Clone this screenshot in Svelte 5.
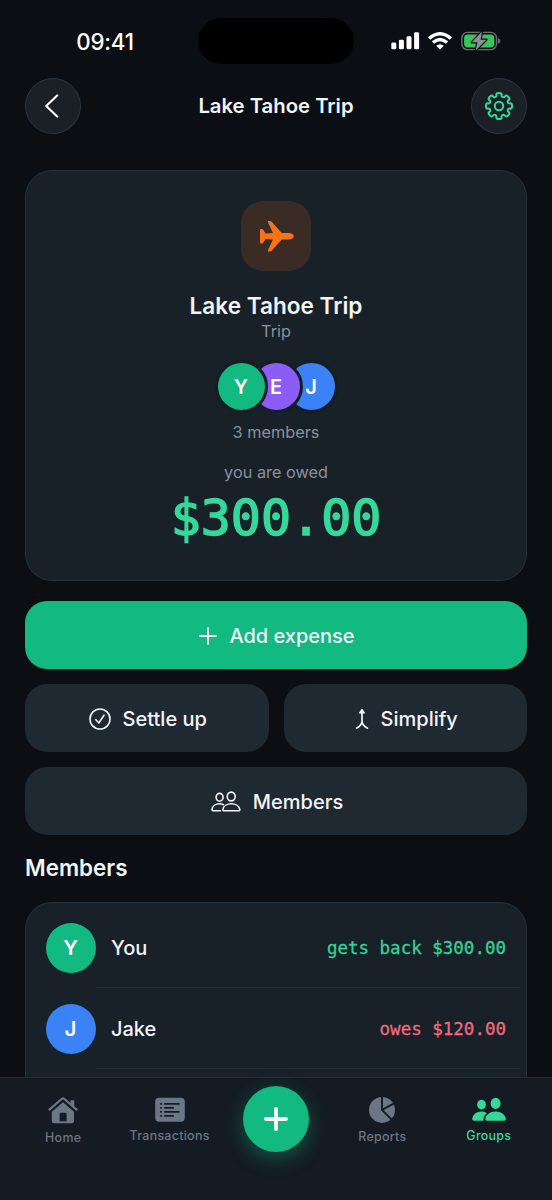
<script lang="ts">
  type Member = { name: string; color: string; label?: string; tone?: string };

  const group = {
    name: 'Lake Tahoe Trip',
    type: 'Trip',
    balance: '$300.00'
  };

  const avatars: Member[] = [
    { name: 'You', color: '#12b981' },
    { name: 'Emma', color: '#8b5cf6' },
    { name: 'Jake', color: '#3b82f6' }
  ];

  const rows: Member[] = [
    { name: 'You', color: '#12b981', label: 'gets back $300.00', tone: 'positive' },
    { name: 'Jake', color: '#3b82f6', label: 'owes $120.00', tone: 'negative' }
  ];

  // Eight-tooth gear outline, smoothed through the midpoints
  function gearPath(c: number, outer: number, inner: number) {
    const pts: number[][] = [];
    for (let i = 0; i < 8; i++) {
      for (const [r, d] of [[inner, -13], [outer, -13], [outer, 13], [inner, 13]]) {
        const a = ((i * 45 + d - 90) * Math.PI) / 180;
        pts.push([c + r * Math.cos(a), c + r * Math.sin(a)]);
      }
    }
    const mid = (p: number[], q: number[]) => `${((p[0] + q[0]) / 2).toFixed(2)} ${((p[1] + q[1]) / 2).toFixed(2)}`;
    let d = `M${mid(pts[pts.length - 1], pts[0])}`;
    pts.forEach((p, i) => {
      d += `Q${p[0].toFixed(2)} ${p[1].toFixed(2)} ${mid(p, pts[(i + 1) % pts.length])}`;
    });
    return d + 'Z';
  }
</script>

<div class="screen">
  <div class="status">
    <span class="time">09:41</span>
    <span class="island"></span>
    <div class="signals">
      <svg width="29" height="18" viewBox="0 0 29 18" fill="#fff">
        <rect x="0.3" y="10.5" width="5" height="6.8" rx="1.4" />
        <rect x="7.9" y="7.7" width="5" height="9.6" rx="1.4" />
        <rect x="15.5" y="4.2" width="5" height="13.1" rx="1.4" />
        <rect x="23.1" y="0.2" width="5" height="17.1" rx="1.4" />
      </svg>
      <svg width="24" height="18" viewBox="0 0 24 18" fill="none" stroke="#fff" stroke-width="3.3">
        <path d="M1.1 6.4Q12-3 22.9 6.4" />
        <path d="M4.9 10.6Q12 4.5 19.1 10.6" />
        <path d="M12 17.4L8.2 13.7Q12 10.7 15.8 13.7Z" fill="#fff" stroke="none" />
      </svg>
      <svg class="battery" width="40" height="20" viewBox="0 0 40 20">
        <rect x="0.9" y="1.4" width="34.6" height="17.2" rx="5.6" fill="none" stroke="#6c6e72" stroke-width="1.4" />
        <path d="M37 7.2Q39.4 8 39.4 10T37 12.8Z" fill="#6c6e72" />
        <rect x="3.1" y="3.6" width="30.2" height="12.8" rx="3.6" fill="#34c759" />
        <path d="M21 0.6L10.8 11.3H16.4L14.7 19.4L25.4 8.7H19.6Z" fill="#8d8e91" stroke="#0b0f14" stroke-width="2.4" stroke-linejoin="round" paint-order="stroke" />
      </svg>
    </div>
  </div>

  <header>
    <button class="round back" aria-label="Back">
      <svg width="16" height="24" viewBox="0 0 16 24" fill="none" stroke="#fff" stroke-width="2.1" stroke-linecap="round" stroke-linejoin="round">
        <path d="M13.2 1.4L2.2 12L13.2 22.6" />
      </svg>
    </button>
    <h1>{group.name}</h1>
    <button class="round" aria-label="Settings">
      <svg width="30" height="30" viewBox="0 0 30 30" fill="none" stroke="#34d99a" stroke-width="2">
        <path d={gearPath(15, 13.4, 9.7)} />
        <circle cx="15" cy="15" r="4.2" />
      </svg>
    </button>
  </header>

  <main>
    <section class="card summary">
      <div class="badge">
        <svg width="36" height="32" viewBox="0 0 36 32" fill="#f97316">
          <path d="M2 9.8Q2 9 2.7 9H4Q4.6 9 5 9.5L7.6 13.5L15 13L9.8 2Q9.4 1 10.5 1H12.2Q13 1 13.6 1.7L23.8 13H31Q35.7 13.5 35.7 16.2T31 19.4H23.8L13.6 30.7Q13 31.4 12.2 31.4H10.5Q9.4 31.4 9.8 30.4L15 19.4L7.6 18.9L5 22.9Q4.6 23.6 4 23.6H2.7Q2 23.6 2 22.6Z" />
        </svg>
      </div>
      <h2>{group.name}</h2>
      <p class="type">{group.type}</p>
      <div class="stack">
        {#each avatars as m, i}
          <span class="avatar small" style="background: {m.color}; z-index: {3 - i}">{m.name[0]}</span>
        {/each}
      </div>
      <p class="count">{avatars.length} members</p>
      <p class="owed">you are owed</p>
      <div class="amount">{group.balance}</div>
    </section>

    <div class="actions">
      <button class="btn primary">
        <svg width="18" height="18" viewBox="0 0 18 18" stroke="currentColor" stroke-width="1.8" stroke-linecap="round">
          <path d="M9 1V17M1 9H17" />
        </svg>
        Add expense
      </button>
      <button class="btn">
        <svg width="22" height="22" viewBox="0 0 22 22" fill="none" stroke="currentColor" stroke-width="1.6" stroke-linecap="round" stroke-linejoin="round">
          <circle cx="11" cy="11" r="10" />
          <path d="M6.9 11.7L9.8 15L15 7.2" />
        </svg>
        Settle up
      </button>
      <button class="btn">
        <svg width="14" height="22" viewBox="0 0 14 22" fill="none" stroke="currentColor" stroke-width="1.7" stroke-linecap="round" stroke-linejoin="round">
          <path d="M7 4V14.6M1.5 20.2Q6.4 17.4 7 13.8Q7.6 17.4 12.5 20.2" />
          <path d="M7 1.4L9.5 5H4.5Z" fill="currentColor" stroke-width="1.2" />
        </svg>
        Simplify
      </button>
      <button class="btn wide">
        <svg width="30" height="22" viewBox="0 0 30 22" fill="none" stroke="currentColor" stroke-width="1.6" stroke-linecap="round" stroke-linejoin="round">
          <ellipse cx="8.6" cy="6.3" rx="3.5" ry="3.9" />
          <ellipse cx="20.2" cy="5.5" rx="4" ry="4.4" />
          <path d="M9.6 19.8H2.4Q1 19.8 1 18.4C1.4 15 4.8 12.8 8.6 12.8Q10.8 12.8 12.4 13.7" />
          <path d="M13.2 19.8Q11.8 19.8 11.9 18.5C12.4 15 16 12.8 20.3 12.8S28.2 15 28.8 18.5Q28.9 19.8 27.4 19.8Z" />
        </svg>
        Members
      </button>
    </div>

    <h3>Members</h3>
    <section class="card list">
      {#each rows as m}
        <div class="row">
          <span class="avatar" style="background: {m.color}">{m.name[0]}</span>
          <span class="name">{m.name}</span>
          <span class="balance {m.tone}">{m.label}</span>
        </div>
      {/each}
    </section>
  </main>

  <nav>
    <div class="tab">
      <svg width="32" height="28" viewBox="0 0 32 28" fill="currentColor">
        <path d="M2.4 13.6L14.6 3Q16 1.9 17.4 3L29.6 13.6" fill="none" stroke="currentColor" stroke-width="2.2" stroke-linecap="round" stroke-linejoin="round" />
        <path d="M23.8 4.6H27V10.2L23.8 7.4Z" stroke="currentColor" stroke-width="0.6" stroke-linejoin="round" />
        <path fill-rule="evenodd" d="M16 6.3L27 15.8V24.8Q27 27.3 24.5 27.3H7.3Q4.8 27.3 4.8 24.8V15.8ZM12.6 17.8V25.3H19.6V17.8Q19.6 16.8 18.6 16.8H13.6Q12.6 16.8 12.6 17.8Z" />
      </svg>
      <span>Home</span>
    </div>
    <div class="tab">
      <svg width="30" height="26" viewBox="0 0 30 26">
        <rect x="0.2" y="1.8" width="29.6" height="24" rx="4" fill="currentColor" />
        <g stroke="#141b22" stroke-width="1.7" stroke-linecap="round">
          <path d="M9.8 7.9H24M9.8 11.8H18.2M9.8 15.8H24M9.8 19.8H18.2" />
          <path d="M5.7 7.9h.6M5.7 11.8h.6M5.7 15.8h.6M5.7 19.8h.6" />
        </g>
      </svg>
      <span>Transactions</span>
    </div>
    <div class="tab">
      <button class="fab" aria-label="Add">
        <svg width="26" height="26" viewBox="0 0 26 26" stroke="#fff" stroke-width="3.8" stroke-linecap="round">
          <path d="M13 3V23M3 13H23" />
        </svg>
      </button>
    </div>
    <div class="tab">
      <svg width="28" height="27" viewBox="0 0 28 27">
        <circle cx="14" cy="13.9" r="13" fill="currentColor" />
        <path d="M14 0V13.9L23.4 23.3M14 13.9L27 6.8" fill="none" stroke="#141b22" stroke-width="1.9" />
      </svg>
      <span>Reports</span>
    </div>
    <div class="tab active">
      <svg width="34" height="26" viewBox="0 0 34 26" fill="currentColor">
        <ellipse cx="9.5" cy="8.6" rx="4.4" ry="4.9" />
        <ellipse cx="23.6" cy="7.4" rx="5" ry="5.6" />
        <path d="M2 24.7Q0.2 24.7 0.2 23.1C0.7 18.6 4.4 15.6 9.5 15.6Q12.6 15.6 14.8 16.9Q11.4 19.8 11.3 23.4Q11.3 24.2 11.6 24.7Z" />
        <path d="M15 24.7Q13 24.7 13.2 22.9C13.8 18.6 17.8 15.4 23.6 15.4S33.3 18.6 33.9 22.9Q34 24.7 32.2 24.7Z" />
      </svg>
      <span>Groups</span>
    </div>
  </nav>
</div>

<style>
  :global(body) {
    margin: 0;
    background: #0b0f14;
  }

  .screen {
    width: 552px;
    height: 1200px;
    display: flex;
    flex-direction: column;
    overflow: hidden;
    background: #0b0f14;
    color: #f1f4f8;
    font-family: Inter, sans-serif;
    -webkit-font-smoothing: antialiased;
  }

  h1, h2, h3, p {
    margin: 0;
  }

  button {
    border: 0;
    padding: 0;
    font-family: inherit;
    color: inherit;
  }

  svg {
    display: block;
    flex: none;
  }

  .status {
    display: grid;
    grid-template-columns: 198px 156px 198px;
    align-items: center;
    height: 46px;
    padding-top: 18px;
  }

  .time {
    justify-self: center;
    padding-left: 12px;
    font-size: 22.3px;
    font-weight: 550;
    letter-spacing: -0.2px;
    color: #fff;
  }

  .island {
    height: 46px;
    border-radius: 23px;
    background: #000;
  }

  .signals {
    display: flex;
    align-items: center;
    gap: 8px;
    padding-left: 37px;
  }

  .battery {
    margin-left: 1px;
  }

  header {
    display: flex;
    align-items: center;
    justify-content: space-between;
    height: 56px;
    padding: 14px 25px 36px;
  }

  h1 {
    padding-bottom: 1px;
    font-size: 20.3px;
    font-weight: 600;
  }

  .round {
    display: flex;
    align-items: center;
    justify-content: center;
    width: 56px;
    height: 56px;
    box-sizing: border-box;
    border: 1px solid #2b3642;
    border-radius: 50%;
    background: #1b1f26;
  }

  .back {
    padding-right: 3px;
  }

  main {
    flex: 1;
    min-height: 0;
    overflow: hidden;
    padding: 0 25px;
  }

  .card {
    border: 1px solid #28323c;
    border-radius: 27px;
    background: #182028;
  }

  .summary {
    display: flex;
    flex-direction: column;
    align-items: center;
    height: 379px;
    padding-top: 30px;
  }

  .badge {
    display: flex;
    align-items: center;
    justify-content: center;
    width: 70px;
    height: 70px;
    border-radius: 22px;
    background: #3a2b25;
  }

  h2 {
    margin-top: 21px;
    font-size: 22.6px;
    font-weight: 600;
    line-height: 28px;
  }

  .type, .count, .owed {
    font-size: 16.3px;
    line-height: 22px;
    color: #89929d;
  }

  .stack {
    display: flex;
    margin-top: 21px;
  }

  .avatar {
    display: flex;
    align-items: center;
    justify-content: center;
    width: 50px;
    height: 50px;
    border-radius: 50%;
    font-size: 20.5px;
    font-weight: 600;
    color: #fff;
  }

  .avatar.small {
    position: relative;
    width: 47px;
    height: 47px;
    font-size: 20px;
    box-shadow: 0 0 0 3px #161d25;
  }

  .avatar.small + .avatar.small {
    margin-left: -12px;
  }

  .count {
    margin-top: 11px;
  }

  .owed {
    margin-top: 18px;
  }

  .amount {
    margin-top: 5px;
    font-family: 'DejaVu Sans Mono', monospace;
    font-size: 50px;
    line-height: 60px;
    color: #34d99a;
    -webkit-text-stroke: 1.5px #34d99a;
  }

  .actions {
    display: grid;
    grid-template-columns: 1fr 1fr;
    gap: 15px;
    margin-top: 20px;
  }

  .btn {
    display: flex;
    align-items: center;
    justify-content: center;
    gap: 12px;
    height: 68px;
    padding: 1px 0 0 2px;
    box-sizing: border-box;
    border-radius: 22px;
    background: #1f2932;
    font-size: 20px;
    font-weight: 500;
  }

  .primary, .wide {
    grid-column: 1 / -1;
  }

  .primary {
    background: #12b981;
  }

  h3 {
    margin-top: 18px;
    font-size: 22.4px;
    font-weight: 600;
    line-height: 30px;
  }

  .list {
    height: 300px;
    margin-top: 19px;
    padding: 4px 0 0 19.5px;
  }

  .row {
    display: flex;
    align-items: center;
    height: 81px;
    padding-right: 20px;
    position: relative;
  }

  .row::after {
    content: '';
    position: absolute;
    left: 50px;
    right: 5px;
    bottom: 0;
    height: 1px;
    background: #222b35;
  }

  .name {
    flex: 1;
    margin-left: 15.5px;
    font-size: 20px;
    font-weight: 500;
  }

  .balance {
    font-family: 'DejaVu Sans Mono', monospace;
    font-size: 17.5px;
    -webkit-text-stroke: 0.3px currentColor;
  }

  .positive {
    color: #34d399;
  }

  .negative {
    color: #f2697d;
  }

  nav {
    display: grid;
    grid-template-columns: repeat(5, 1fr);
    height: 122px;
    padding: 0 10px;
    border-top: 1px solid #232d36;
    background: #141b22;
  }

  .tab {
    display: flex;
    flex-direction: column;
    align-items: center;
    padding-top: 18px;
    color: #6b7785;
    font-size: 12.4px;
    font-weight: 500;
    letter-spacing: 0.3px;
    line-height: 16px;
  }

  .tab span {
    margin-top: 6px;
  }

  .tab.active {
    color: #34d99a;
  }

  .fab {
    display: flex;
    align-items: center;
    justify-content: center;
    flex: none;
    width: 66px;
    height: 66px;
    margin-top: -10px;
    border-radius: 50%;
    background: #12b981;
    box-shadow: 0 6px 20px rgba(18, 185, 129, 0.38);
  }
</style>
